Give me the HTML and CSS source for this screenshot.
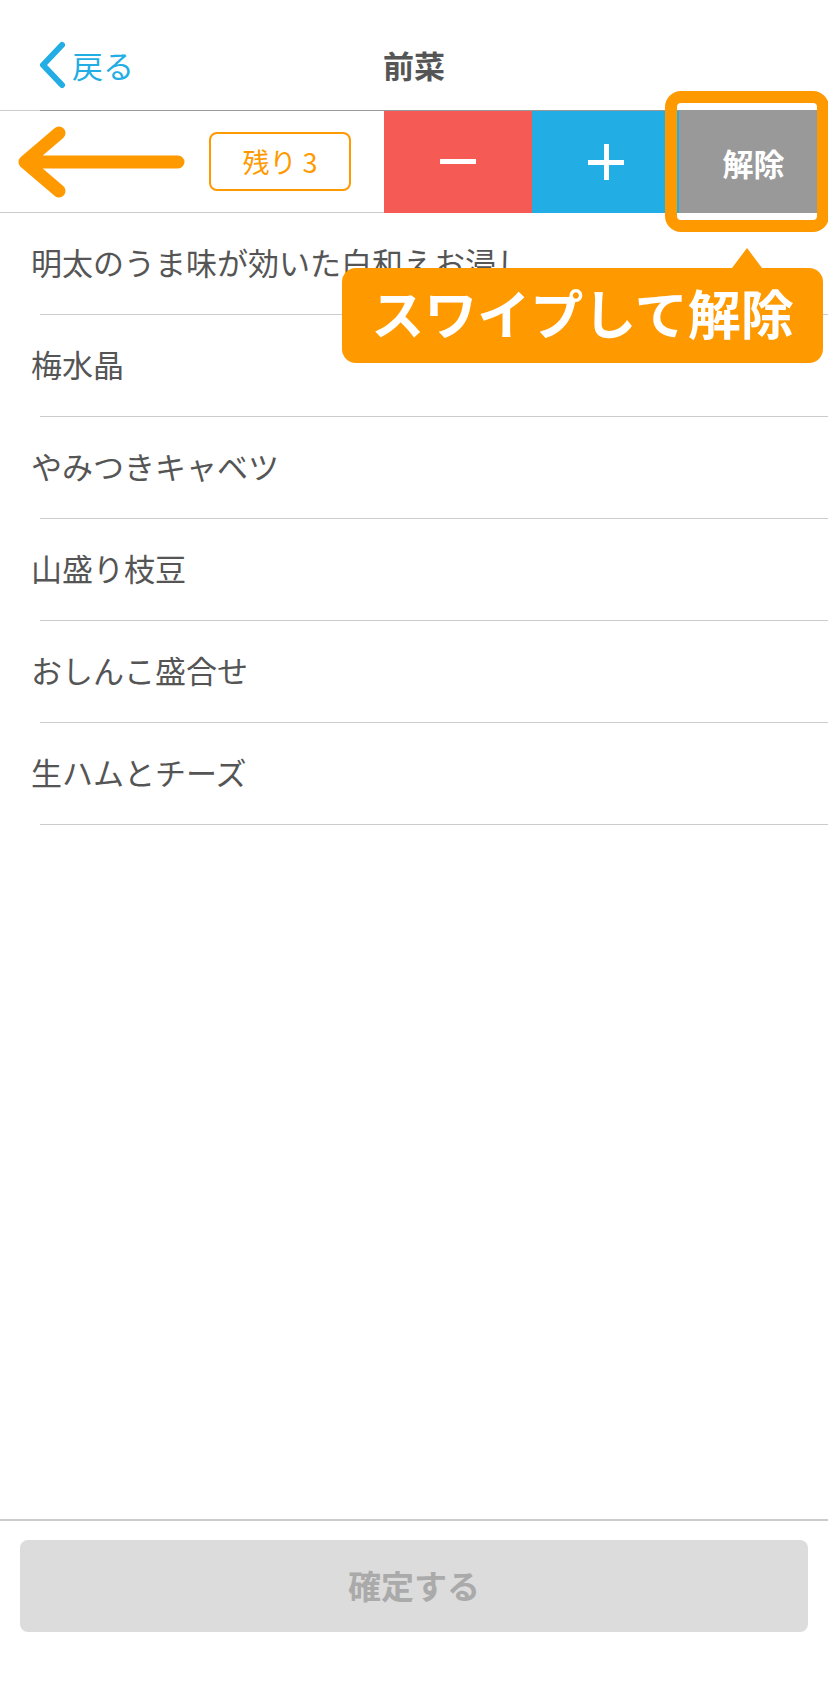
FILE: index.html
```html
<!DOCTYPE html>
<html lang="ja">
<head>
  <meta charset="UTF-8">
  <meta name="viewport" content="width=device-width, initial-scale=1.0">
  <title>前菜</title>
  <link rel="stylesheet" href="styles.css">
</head>
<body>

<div class="page">
  <!-- Navigation bar -->
  <div class="nav">
    <a class="back-link" href="#">
      <svg class="back-icon" width="28" height="48" viewBox="0 0 28 48">
        <path d="M24 4 L5 24 L24 44" fill="none" stroke="#22aee4" stroke-width="6" stroke-linecap="round" stroke-linejoin="round"/>
      </svg>
      <span>戻る</span>
    </a>
    <div class="nav-title">前菜</div>
    <div></div>
  </div>

  <!-- Swiped row -->
  <div class="swipe-row">
    <div class="swipe-content">
      <svg class="swipe-arrow" width="200" height="101" viewBox="0 0 200 101">
        <path d="M59 22 L25 51 L59 80 M25 51 H178" fill="none" stroke="#ff9900" stroke-width="13" stroke-linecap="round" stroke-linejoin="round"/>
      </svg>
      <div class="remain-badge">残り 3</div>
    </div>
    <button class="action-btn minus-btn">
      <svg width="36" height="6" viewBox="0 0 36 6"><rect width="36" height="5" fill="#fff"/></svg>
    </button>
    <button class="action-btn plus-btn">
      <svg width="36" height="36" viewBox="0 0 36 36"><rect y="16" width="36" height="5" fill="#fff"/><rect x="16" width="5" height="36" fill="#fff"/></svg>
    </button>
    <button class="action-btn release-btn">
      解除
      <span class="highlight-frame"></span>
    </button>

    <div class="swipe-tip">スワイプして解除</div>
  </div>

  <!-- Menu list -->
  <ul class="menu-list">
    <li class="menu-item">明太のうま味が効いた白和えお浸し</li>
    <li class="menu-item">梅水晶</li>
    <li class="menu-item">やみつきキャベツ</li>
    <li class="menu-item">山盛り枝豆</li>
    <li class="menu-item">おしんこ盛合せ</li>
    <li class="menu-item">生ハムとチーズ</li>
  </ul>

  <!-- Footer -->
  <div class="footer">
    <button class="confirm-btn" disabled>確定する</button>
  </div>
</div>

</body>
</html>
```

FILE: styles.css
```css
* {
  box-sizing: border-box;
}

body {
  margin: 0;
  font-family: "Noto Sans CJK JP", "Noto Sans", sans-serif;
  background-color: #fff;
  color: #555;
}

.page {
  display: flex;
  flex-direction: column;
  min-height: 100vh;
  overflow: hidden;
}

/* Navigation bar */
.nav {
  display: grid;
  grid-template-columns: 1fr auto 1fr;
  align-items: center;
  height: 111px;
  padding-top: 18px;
  background: linear-gradient(to right, #ccc 40px, #999 40px) no-repeat left bottom / 100% 1px;
}

.back-link {
  display: flex;
  align-items: center;
  padding-left: 38px;
  color: #22aee4;
  font-size: 31px;
  text-decoration: none;
}

.back-icon {
  margin-right: 6px;
}

.nav-title {
  font-size: 31px;
  font-weight: bold;
  color: #555;
}

/* Swiped row */
.swipe-row {
  position: relative;
  display: flex;
  height: 102px;
}

.swipe-content {
  display: flex;
  align-items: center;
  width: 384px;
  border-bottom: 1px solid #ccc;
}

.swipe-arrow {
  margin-right: 9px;
}

.remain-badge {
  width: 142px;
  height: 59px;
  border: 2px solid #ff9900;
  border-radius: 8px;
  color: #ff9900;
  font-size: 27px;
  display: flex;
  align-items: center;
  justify-content: center;
}

.action-btn {
  display: flex;
  align-items: center;
  justify-content: center;
  border: none;
  padding: 0;
  margin: 0;
  font-family: inherit;
  cursor: pointer;
}

.minus-btn {
  width: 148px;
  background-color: #f55a55;
}

.plus-btn {
  width: 147px;
  background-color: #22aee4;
}

.release-btn {
  position: relative;
  width: 149px;
  background-color: #999;
  color: #fff;
  font-size: 31px;
  font-weight: bold;
}

.highlight-frame {
  position: absolute;
  left: -14px;
  right: -1px;
  top: -20px;
  bottom: -19px;
  border: 12px solid #ff9900;
  border-radius: 16px;
}

.swipe-tip {
  position: absolute;
  top: 157px;
  left: 342px;
  width: 481px;
  height: 95px;
  padding-bottom: 8px;
  background-color: #ff9900;
  border-radius: 14px;
  color: #fff;
  font-size: 53px;
  font-weight: bold;
  display: flex;
  align-items: center;
  justify-content: center;
  z-index: 2;
}

.swipe-tip::before {
  content: "";
  position: absolute;
  top: -20px;
  left: 390px;
  border-left: 15px solid transparent;
  border-right: 15px solid transparent;
  border-bottom: 20px solid #ff9900;
}

/* Menu list */
.menu-list {
  flex: 1;
  list-style: none;
  margin: 0;
  padding: 0;
}

.menu-item {
  display: flex;
  align-items: center;
  height: 102px;
  padding: 0 0 5px 31px;
  font-size: 31px;
  color: #555;
  background: linear-gradient(#ccc, #ccc) no-repeat 40px 100% / calc(100% - 40px) 1px;
}

/* Footer */
.footer {
  border-top: 2px solid #ccc;
  padding: 19px 20px 53px;
}

.confirm-btn {
  display: block;
  width: 100%;
  height: 92px;
  padding-bottom: 4px;
  border: none;
  border-radius: 8px;
  background-color: #dcdcdc;
  color: #aaa;
  font-family: inherit;
  font-size: 33px;
  font-weight: bold;
}
```
